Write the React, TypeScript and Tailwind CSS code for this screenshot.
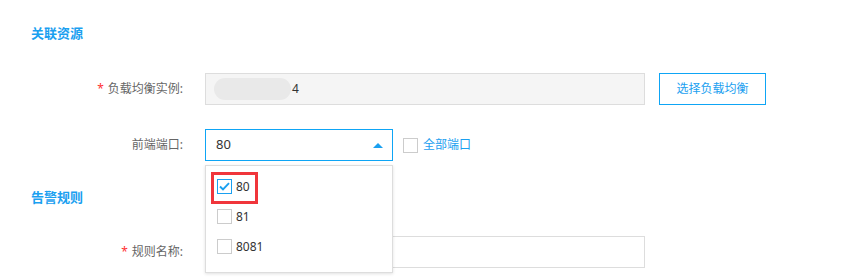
import React from "react";

const font = { fontFamily: '"Noto Sans", "Noto Sans CJK SC", sans-serif' };

function Check() {
  return (
    <svg width="11" height="9" viewBox="0 0 11 9" fill="none">
      <path d="M1 4.5 L4 7.5 L10 1.2" stroke="#1aa0f0" strokeWidth="1.9" />
    </svg>
  );
}

function Label({ req, text }: { req?: boolean; text: string }) {
  return (
    <div className="w-[184px] shrink-0 text-right text-[12px] text-[#666] pr-[1px]">
      {req && <span className="text-[#f33] mr-[4px]">*</span>}
      {text}
    </div>
  );
}

export default function App() {
  const items = ["80", "81", "8081"];
  return (
    <div className="relative w-[843px] h-[280px] bg-white overflow-hidden" style={font}>
      <div className="pt-[24px]">
        <div className="pl-[31px] text-[13px] font-bold leading-[18px] text-[#1aa0f0]">关联资源</div>

        <div className="mt-[31px] flex items-center h-[32px]">
          <Label req text="负载均衡实例:" />
          <div className="ml-[21px] w-[440px] h-[32px] bg-[#f5f5f5] border border-[#ddd] flex items-center pl-[8px]">
            <div className="w-[77px] h-[22px] rounded-full bg-[#e9e9e9]" />
            <span className="text-[12px] text-[#333] ml-[1px]">4</span>
          </div>
          <button className="ml-[14px] w-[107px] h-[32px] border border-[#0ea5f5] text-[#1aa0f0] text-[12px] bg-white">
            选择负载均衡
          </button>
        </div>

        <div className="mt-[24px] flex items-center h-[32px]">
          <Label text="前端端口:" />
          <div className="ml-[21px] w-[188px] h-[32px] border border-[#0ea5f5] flex items-center justify-between pl-[10px] pr-[9px]">
            <span className="text-[13px] text-[#333]">80</span>
            <svg width="10" height="5" viewBox="0 0 10 5">
              <path d="M0 5 L5 0 L10 5 Z" fill="#1aa0f0" />
            </svg>
          </div>
          <div className="ml-[10px] w-[15px] h-[15px] border border-[#ccc] bg-white" />
          <span className="ml-[5px] text-[12px] text-[#1aa0f0]">全部端口</span>
        </div>

        <div className="mt-[27px] pl-[31px] text-[13px] font-bold leading-[18px] text-[#1aa0f0]">告警规则</div>

        <div className="mt-[30px] flex items-center h-[32px]">
          <Label req text="规则名称:" />
          <div className="ml-[21px] w-[440px] h-[32px] border border-[#ddd] bg-white" />
        </div>
      </div>

      <div className="absolute left-[205px] top-[165px] w-[188px] h-[108px] bg-white border border-[#ddd] shadow-[0_1px_3px_rgba(0,0,0,0.12)] pt-[13px] pl-[11px]">
        {items.map((it, i) => (
          <div key={it} className="flex items-center h-[15px] mb-[15px]">
            <div
              className={
                i === 0
                  ? "w-[15px] h-[15px] border border-[#1aa0f0] bg-white flex items-center justify-center"
                  : "w-[15px] h-[15px] border border-[#ccc] bg-white"
              }
            >
              {i === 0 && <Check />}
            </div>
            <span className="ml-[4px] text-[12px] text-[#333]">{it}</span>
          </div>
        ))}
        <div className="absolute left-[5px] top-[6px] w-[47px] h-[32px] border-[3px] border-[#f0353b]" />
      </div>
    </div>
  );
}
